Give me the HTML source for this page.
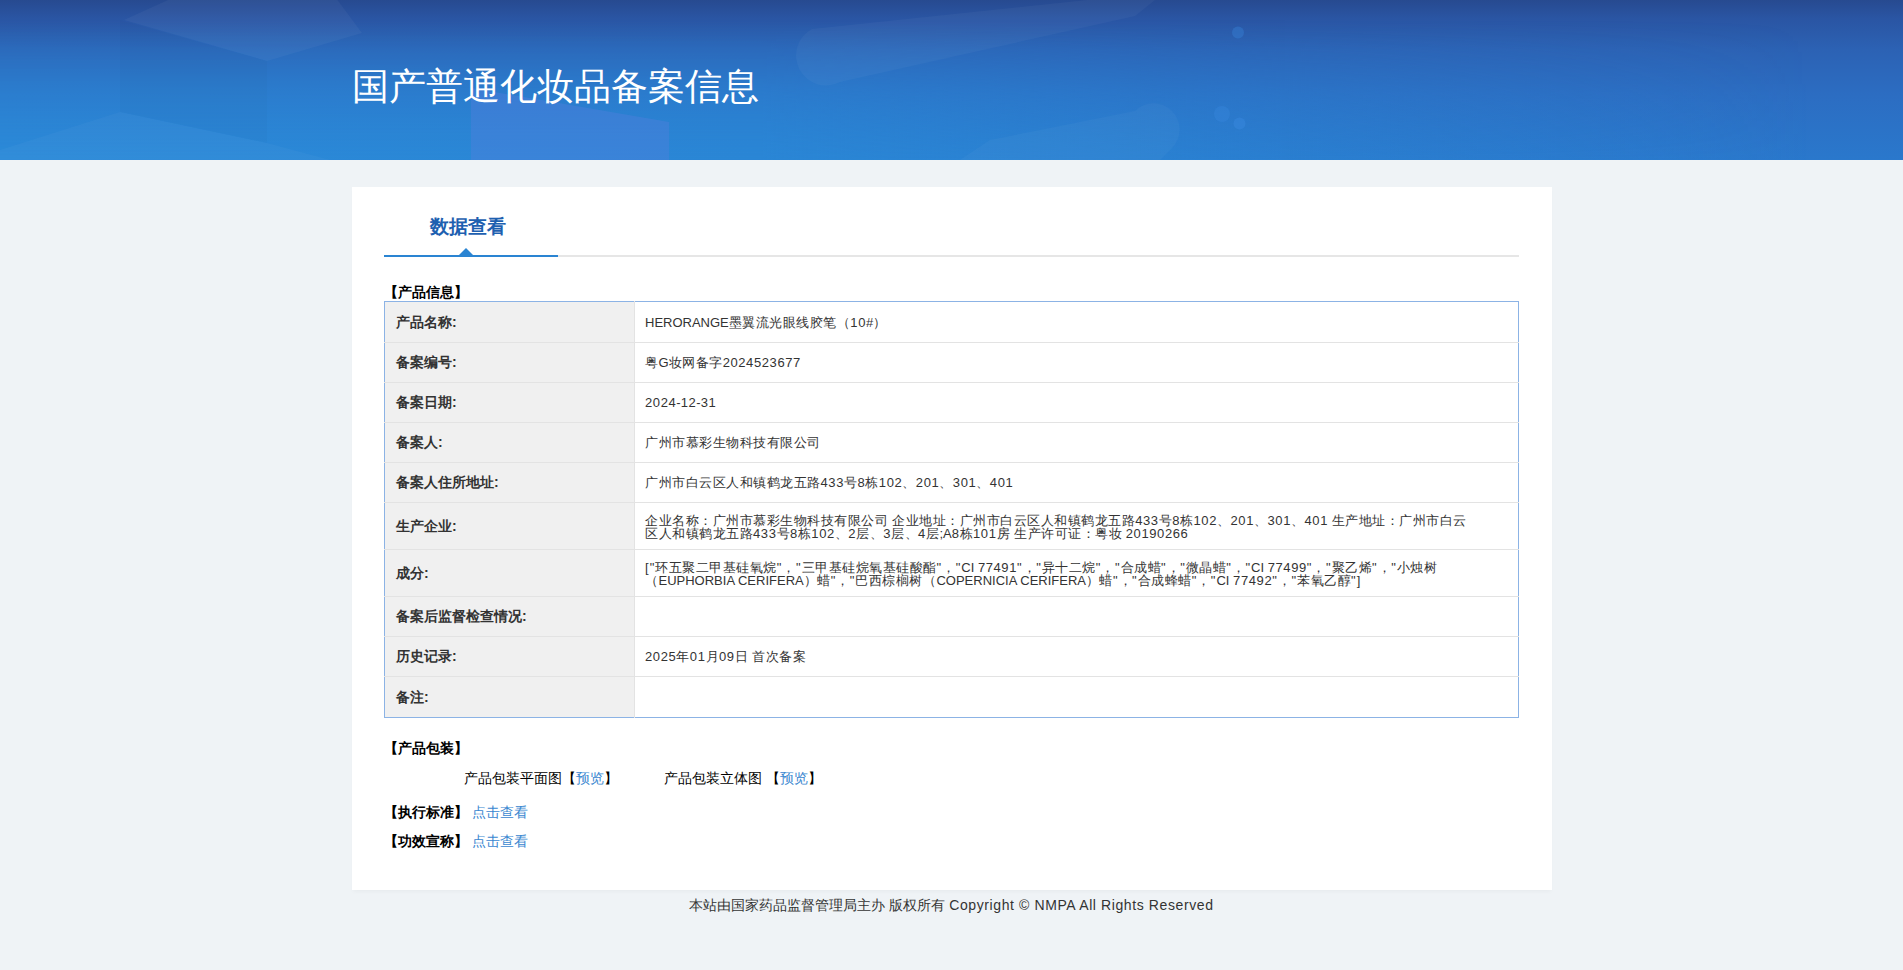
<!DOCTYPE html>
<html><head><meta charset="utf-8">
<style>
*{margin:0;padding:0;box-sizing:border-box}
html,body{width:1903px;height:970px;overflow:hidden}
body{background:#eff3f6;font-family:"Liberation Sans",sans-serif;color:#333;position:relative}
.hdr{position:absolute;left:0;top:0;width:1903px;height:160px;overflow:hidden;
 background:linear-gradient(180deg,#274a90 0px,#2a55a3 18px,#2c62b4 50px,#2c6dc2 95px,#2a78cc 160px)}
.hdr .tint{position:absolute;left:0;top:0;width:1903px;height:160px;
 background:linear-gradient(90deg,#2b8ad8 0%,#2a86d5 40%,rgba(42,124,208,0) 95%);
 -webkit-mask-image:linear-gradient(180deg,rgba(0,0,0,0) 20px,rgba(0,0,0,.55) 90px,#000 160px);
 mask-image:linear-gradient(180deg,rgba(0,0,0,0) 20px,rgba(0,0,0,.55) 90px,#000 160px)}
.hdr svg{position:absolute;left:0;top:0}
.hdr h1{position:absolute;left:352px;top:63px;font-size:37px;font-weight:normal;color:#fff;line-height:48px;white-space:nowrap}
.card{position:absolute;left:352px;top:187px;width:1200px;height:703px;background:#fff;box-shadow:0 3px 4px -1px rgba(0,0,0,.03)}
.tabbar{position:absolute;left:32px;top:68px;width:1135px;height:2px;background:#e6e6e6}
.tabbar .on{position:absolute;left:0;top:0;width:174px;height:2px;background:#2a84d2}
.tabbar .tri{position:absolute;left:75px;top:-7px;width:0;height:0;border-left:7px solid transparent;border-right:7px solid transparent;border-bottom:7px solid #2a84d2}
.tab{position:absolute;left:78px;top:27px;font-size:19px;font-weight:bold;color:#1e60b0;line-height:26px;white-space:nowrap}
.sec{position:absolute;font-size:14px;font-weight:bold;color:#000;line-height:16px;white-space:nowrap}
table{position:absolute;left:32px;top:114px;width:1135px;border-collapse:collapse;border:1px solid #8cb3e5}
td{border-bottom:1px solid #e3e3e3;font-size:13px;line-height:13px;vertical-align:middle}
td.l{width:250px;background:#f0f0f0;font-weight:bold;font-size:14px;color:#333;padding-left:11px;border-right:1px solid #e3e3e3}
td.v{padding-left:10px;color:#333;letter-spacing:.5px}
tr:last-child td{border-bottom:0}
td.v i{font-style:normal;letter-spacing:0}
td.v em{font-style:normal;letter-spacing:.6px}
td.v q{letter-spacing:1px}
td.v q:before,td.v q:after{content:none}
.lnk{color:#3a87d0}
.foot{position:absolute;left:0;top:895px;width:1903px;text-align:center;font-size:14px;color:#333;line-height:20px}
</style></head><body>
<div class="hdr"><div class="tint"></div>
<svg width="1903" height="160" viewBox="0 0 1903 160">
 <polygon points="124,20 267,61 362,33 330,-10 190,-10" fill="#fff" fill-opacity=".04"/>
 <polygon points="120,20 267,61 267,143 120,112" fill="#000" fill-opacity=".015"/>
 <polygon points="0,150 120,112 267,143 330,160 0,160" fill="#fff" fill-opacity=".03"/>
 <polygon points="471,88 669,122 669,160 471,160" fill="#5a7fe0" fill-opacity=".35"/>
 <path d="M812,29 L1106,-2 L1165,-8 L1135,16 L840,82 A27,27 0 0 1 812,29 Z" fill="#fff" fill-opacity=".035"/>
 <path d="M960,160 L990,140 L1135,111 A24,24 0 0 1 1172,148 L1160,160 Z" fill="#fff" fill-opacity=".03"/>
 <circle cx="1238" cy="32.5" r="6" fill="#3a8ae0" fill-opacity=".35"/>
 <circle cx="1222" cy="114" r="8" fill="#3a8ae0" fill-opacity=".35"/>
 <circle cx="1239.5" cy="123.5" r="6" fill="#3a8ae0" fill-opacity=".45"/>
</svg>
<h1>国产普通化妆品备案信息</h1></div>
<div class="card">
 <div class="tab">数据查看</div>
 <div class="tabbar"><div class="on"></div><div class="tri"></div></div>
 <div class="sec" style="left:32px;top:97px">【产品信息】</div>
 <table>
  <tr style="height:41px"><td class="l">产品名称:</td><td class="v"><i>HERORANGE</i>墨翼流光眼线胶笔（<i><em>10</em>#</i>）</td></tr>
  <tr style="height:40px"><td class="l">备案编号:</td><td class="v">粤<i>G</i>妆网备字<i><em>2024523677</em></i></td></tr>
  <tr style="height:40px"><td class="l">备案日期:</td><td class="v"><i><em>2024</em>-<em>12</em>-<em>31</em></i></td></tr>
  <tr style="height:40px"><td class="l">备案人:</td><td class="v">广州市慕彩生物科技有限公司</td></tr>
  <tr style="height:40px"><td class="l">备案人住所地址:</td><td class="v">广州市白云区人和镇鹤龙五路<i><em>433</em></i>号<i><em>8</em></i>栋<i><em>102</em></i>、<i><em>201</em></i>、<i><em>301</em></i>、<i><em>401</em></i></td></tr>
  <tr style="height:47px"><td class="l">生产企业:</td><td class="v" style="padding-top:2px">企业名称：广州市慕彩生物科技有限公司 企业地址：广州市白云区人和镇鹤龙五路<i><em>433</em></i>号<i><em>8</em></i>栋<i><em>102</em></i>、<i><em>201</em></i>、<i><em>301</em></i>、<i><em>401</em> </i>生产地址：广州市白云<br>区人和镇鹤龙五路<i><em>433</em></i>号<i><em>8</em></i>栋<i><em>102</em></i>、<i><em>2</em></i>层、<i><em>3</em></i>层、<i><em>4</em></i>层<i>;A<em>8</em></i>栋<i><em>101</em></i>房 生产许可证：粤妆<i> <em>20190266</em></i></td></tr>
  <tr style="height:47px"><td class="l">成分:</td><td class="v" style="padding-top:2px"><i><q>[</q><q>"</q></i>环五聚二甲基硅氧烷<i><q>"</q></i>，<i><q>"</q></i>三甲基硅烷氧基硅酸酯<i><q>"</q></i>，<i><q>"</q>CI <em>77491</em><q>"</q></i>，<i><q>"</q></i>异十二烷<i><q>"</q></i>，<i><q>"</q></i>合成蜡<i><q>"</q></i>，<i><q>"</q></i>微晶蜡<i><q>"</q></i>，<i><q>"</q>CI <em>77499</em><q>"</q></i>，<i><q>"</q></i>聚乙烯<i><q>"</q></i>，<i><q>"</q></i>小烛树<br>（<i>EUPHORBIA CERIFERA</i>）蜡<i><q>"</q></i>，<i><q>"</q></i>巴西棕榈树（<i>COPERNICIA CERIFERA</i>）蜡<i><q>"</q></i>，<i><q>"</q></i>合成蜂蜡<i><q>"</q></i>，<i><q>"</q>CI <em>77492</em><q>"</q></i>，<i><q>"</q></i>苯氧乙醇<i><q>"</q><q>]</q></i></td></tr>
  <tr style="height:40px"><td class="l">备案后监督检查情况:</td><td class="v"></td></tr>
  <tr style="height:40px"><td class="l">历史记录:</td><td class="v"><i><em>2025</em></i>年<i><em>01</em></i>月<i><em>09</em></i>日 首次备案</td></tr>
  <tr style="height:41px"><td class="l">备注:</td><td class="v"></td></tr>
 </table>
 <div class="sec" style="left:32px;top:553px">【产品包装】</div>
 <div class="sec" style="left:112px;top:583px;font-weight:normal;color:#000">产品包装平面图【<span class="lnk">预览</span>】</div>
 <div class="sec" style="left:312px;top:583px;font-weight:normal;color:#000">产品包装立体图 【<span class="lnk">预览</span>】</div>
 <div class="sec" style="left:32px;top:617px">【执行标准】 <span class="lnk" style="font-weight:normal">点击查看</span></div>
 <div class="sec" style="left:32px;top:646px">【功效宣称】 <span class="lnk" style="font-weight:normal">点击查看</span></div>
</div>
<div class="foot">本站由国家药品监督管理局主办 版权所有 <span style="letter-spacing:.6px">Copyright © NMPA All Rights Reserved</span></div>
</body></html>
